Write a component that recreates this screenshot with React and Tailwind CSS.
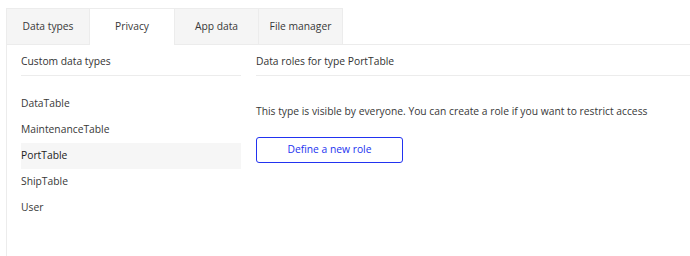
import React, { useState } from 'react';

const tabs = ['Data types', 'Privacy', 'App data', 'File manager'];
const types = ['DataTable', 'MaintenanceTable', 'PortTable', 'ShipTable', 'User'];

const App = () => {
    const [activeTab, setActiveTab] = useState('Privacy');
    const [selected, setSelected] = useState('PortTable');

    return (
        <div className="min-h-screen bg-white pl-[6px] pt-[8px] text-[10.3px] text-[#383838]" style={{ fontFamily: '"Open Sans", "Liberation Sans", sans-serif' }}>
            {/* Tabs */}
            <div className="flex">
                {tabs.map((tab) => (
                    <button
                        key={tab}
                        onClick={() => setActiveTab(tab)}
                        className={
                            tab === activeTab
                                ? 'w-[85px] h-[37px] border-t border-r border-[#ececec] bg-white text-[#383838]'
                                : 'w-[84px] h-[37px] border-t border-r border-b border-[#ececec] bg-[#f5f5f5] text-[#383838] first:border-l'
                        }
                    >
                        {tab}
                    </button>
                ))}
                <div className="flex-1 border-b border-[#ececec]"></div>
            </div>

            {/* Panel */}
            <div className="flex gap-[15px] border-l border-[#ececec] pl-[14px] h-[211px]">
                <div className="w-[220px]">
                    <div className="h-[31px] pt-[3px] flex items-center border-b border-[#ececec] text-[#333333]">Custom data types</div>
                    <div className="mt-[15px] flex flex-col">
                        {types.map((t) => (
                            <div
                                key={t}
                                onClick={() => setSelected(t)}
                                className={
                                    t === selected
                                        ? 'h-[26px] flex items-center bg-[#f6f6f6] text-[#222222]'
                                        : 'h-[26px] flex items-center text-[#383838]'
                                }
                            >
                                {t}
                            </div>
                        ))}
                    </div>
                </div>
                <div className="flex-1">
                    <div className="h-[31px] pt-[3px] flex items-center border-b border-[#ececec] text-[#333333]">Data roles for type {selected}</div>
                    <p className="mt-[27px] leading-[16px]">This type is visible by everyone. You can create a role if you want to restrict access</p>
                    <button className="mt-[18px] w-[147px] h-[26px] rounded-[3px] border border-[#2233f0] text-[#2233f0]">
                        Define a new role
                    </button>
                </div>
            </div>
        </div>
    );
};

export default App;
